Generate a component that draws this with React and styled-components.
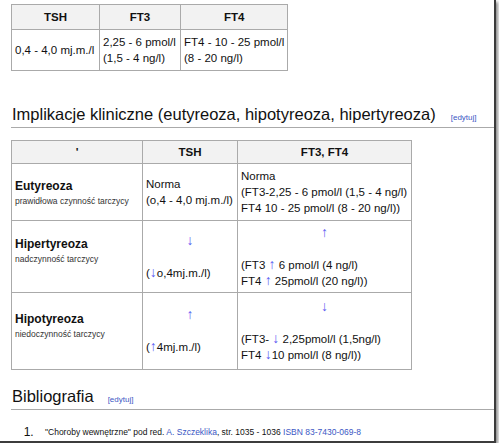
import React from 'react'
import styled, { createGlobalStyle } from 'styled-components'

const GlobalStyle = createGlobalStyle`
    html, body {
        margin: 0;
        padding: 0;
        background: #fff;
    }
    body {
        font-family: "Liberation Sans", Arial, sans-serif;
        color: #111;
    }
`

const Page = styled.div`
    box-sizing: border-box;
    width: 496px;
    height: 443px;
    padding: 4px 0 0 11px;
    background: #fff;
    border-right: 2px solid #3c3c3c;
    border-bottom: 2px solid #3c3c3c;
    box-shadow: 2px 2px 3px rgba(0, 0, 0, 0.45);
    overflow: hidden;
`

const Table = styled.table`
    border-collapse: collapse;
    table-layout: fixed;
    font-size: ${props => props.$size || 12}px;
    line-height: 16px;
    border: 1px solid #aaa;
    margin-top: ${props => props.$top || 0}px;
`

const Row = styled.tr`
    height: ${props => props.$h}px;
`

const Th = styled.th`
    background: #f2f2f2;
    border: 1px solid #aaa;
    font-weight: bold;
    text-align: center;
    padding: 0 3px;
`

const Td = styled.td`
    border: 1px solid #aaa;
    padding: 3px 3px;
    vertical-align: middle;
    text-align: left;
    white-space: nowrap;
    overflow: hidden;
`

const Name = styled.div`
    font-weight: bold;
    font-size: 12px;
    line-height: 17px;
`

const Note = styled.div`
    font-size: 8.5px;
    line-height: 12px;
    color: #333;
`

const Center = styled.div`
    text-align: center;
`

const Arrow = styled.span`
    color: #5b5bf2;
    font-size: 14px;
    line-height: 0;
`

const Heading = styled.h2`
    margin: ${props => props.$top}px 0 0 0;
    padding: 0 0 3px 1px;
    font-size: 16.5px;
    line-height: 20px;
    font-weight: normal;
    color: #111;
    border-bottom: 1px solid #aaa;
    white-space: nowrap;
`

const EditLink = styled.span`
    font-size: 8px;
    line-height: 1;
    color: #3b57c4;
    margin-left: ${props => props.$gap}px;
`

const List = styled.ol`
    margin: 14px 0 0 0;
    padding: 0 0 0 26px;
    font-size: 12px;
    line-height: 16px;
`

const Item = styled.li`
    padding-left: 8px;
    & > span {
        font-size: 8.5px;
        vertical-align: 1px;
    }
`

const Link = styled.span`
    color: #3b57c4;
`

function App() {
    return (
        <>
            <GlobalStyle />
            <Page>
                <Table $size={11.5}>
                    <colgroup>
                        <col style={{ width: 88 }} />
                        <col style={{ width: 81 }} />
                        <col style={{ width: 107 }} />
                    </colgroup>
                    <thead>
                        <Row $h={25}>
                            <Th>TSH</Th>
                            <Th>FT3</Th>
                            <Th>FT4</Th>
                        </Row>
                    </thead>
                    <tbody>
                        <Row $h={41}>
                            <Td>0,4 - 4,0 mj.m./l</Td>
                            <Td>2,25 - 6 pmol/l<br />(1,5 - 4 ng/l)</Td>
                            <Td>FT4 - 10 - 25 pmol/l<br />(8 - 20 ng/l)</Td>
                        </Row>
                    </tbody>
                </Table>

                <Heading $top={33}>
                    Implikacje kliniczne (eutyreoza, hipotyreoza, hipertyreoza)
                    <EditLink $gap={15}>[edytuj]</EditLink>
                </Heading>

                <Table $size={11.5} $top={12}>
                    <colgroup>
                        <col style={{ width: 131 }} />
                        <col style={{ width: 95 }} />
                        <col style={{ width: 174 }} />
                    </colgroup>
                    <thead>
                        <Row $h={23}>
                            <Th>'</Th>
                            <Th>TSH</Th>
                            <Th>FT3, FT4</Th>
                        </Row>
                    </thead>
                    <tbody>
                        <Row $h={57}>
                            <Td>
                                <Name>Eutyreoza</Name>
                                <Note>prawidłowa czynność tarczycy</Note>
                            </Td>
                            <Td>Norma<br />(o,4 - 4,0 mj.m./l)</Td>
                            <Td>Norma<br />(FT3-2,25 - 6 pmol/l (1,5 - 4 ng/l)<br />FT4 10 - 25 pmol/l (8 - 20 ng/l))</Td>
                        </Row>
                        <Row $h={72}>
                            <Td>
                                <Name>Hipertyreoza</Name>
                                <Note>nadczynność tarczycy</Note>
                                <Note>&nbsp;</Note>
                            </Td>
                            <Td>
                                <Center><Arrow>↓</Arrow></Center>
                                <br />
                                (<Arrow>↓</Arrow>o,4mj.m./l)
                            </Td>
                            <Td>
                                <Center><Arrow>↑</Arrow></Center>
                                <br />
                                (FT3 <Arrow>↑</Arrow> 6 pmol/l (4 ng/l)<br />
                                FT4 <Arrow>↑</Arrow> 25pmol/l (20 ng/l))
                            </Td>
                        </Row>
                        <Row $h={77}>
                            <Td>
                                <Name>Hipotyreoza</Name>
                                <Note>niedoczynność tarczycy</Note>
                                <Note>&nbsp;</Note>
                            </Td>
                            <Td>
                                <Center><Arrow>↑</Arrow></Center>
                                <br />
                                (<Arrow>↑</Arrow>4mj.m./l)
                            </Td>
                            <Td>
                                <Center><Arrow>↓</Arrow></Center>
                                <br />
                                (FT3- <Arrow>↓</Arrow> 2,25pmol/l (1,5ng/l)<br />
                                FT4 <Arrow>↓</Arrow>10 pmol/l (8 ng/l))
                            </Td>
                        </Row>
                    </tbody>
                </Table>

                <Heading $top={16}>
                    Bibliografia
                    <EditLink $gap={14}>[edytuj]</EditLink>
                </Heading>

                <List>
                    <Item>
                        <span>
                            "Choroby wewnętrzne" pod red. <Link>A. Szczeklika</Link>, str. 1035 - 1036 <Link>ISBN 83-7430-069-8</Link>
                        </span>
                    </Item>
                </List>
            </Page>
        </>
    )
}

export default App
